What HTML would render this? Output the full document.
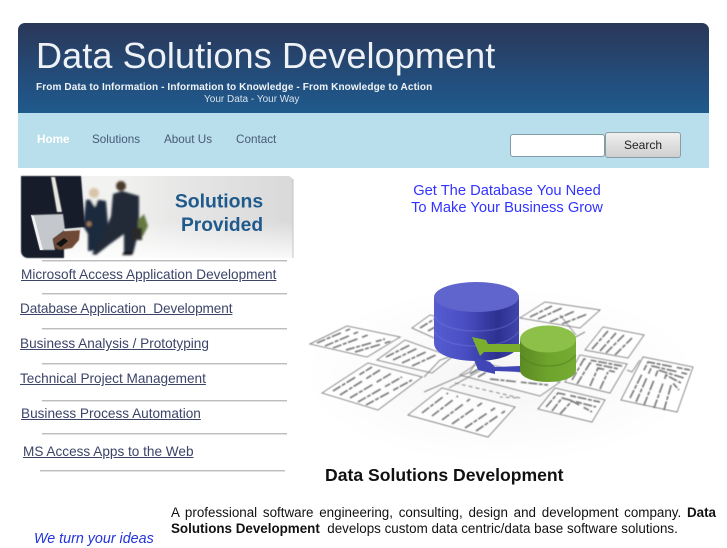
<!DOCTYPE html>
<html><head><meta charset="utf-8"><title>Data Solutions Development</title>
<style>
html,body{margin:0;padding:0;background:#fff;}
body{width:727px;height:545px;overflow:hidden;position:relative;font-family:"Liberation Sans",sans-serif;}
.a{position:absolute;white-space:nowrap;}
.l{position:absolute;height:1px;background:#bdbdbd;box-shadow:0 1px 0 #e2e2e2;}
a{color:#3c4468;text-decoration:underline;}
.k{position:absolute;white-space:pre;font-size:13.6px;line-height:16px;}
.n{position:absolute;top:132px;font-size:11.7px;line-height:15px;color:#4a5a78;white-space:nowrap;}
</style></head><body>

<div class="a" style="left:18px;top:23px;width:691px;height:90px;border-radius:7px 7px 0 0;background:linear-gradient(#2a3758,#225080 70%,#1f5a8c);"></div>
<div class="a" style="left:18px;top:113px;width:691px;height:55px;background:#b8dfeb;"></div>

<div class="a" style="left:36px;top:36px;font-size:36px;line-height:40px;letter-spacing:.12px;color:#eef2f6;">Data Solutions Development</div>
<div class="a" style="left:36px;top:81px;font-size:10px;line-height:13px;letter-spacing:.115px;font-weight:bold;color:#f0f3f6;">From Data to Information - Information to Knowledge - From Knowledge to Action</div>
<div class="a" style="left:204px;top:93px;font-size:10px;line-height:13px;color:#d8e2ea;">Your Data - Your Way</div>

<div class="n" style="left:37px;color:#fff;font-weight:bold;">Home</div>
<div class="n" style="left:92px;">Solutions</div>
<div class="n" style="left:164px;">About Us</div>
<div class="n" style="left:236px;">Contact</div>

<div class="a" style="left:510px;top:134px;width:93px;height:21px;background:#fff;border:1px solid #7f9ca8;border-radius:3px;"></div>
<div class="a" style="left:605px;top:132px;width:74px;height:24px;border:1px solid #8b9ca3;border-radius:3px;background:linear-gradient(#efefef,#cfcfcf);font-size:12px;line-height:24px;text-align:center;color:#222;">Search</div>

<div class="a" style="left:307px;width:400px;top:183px;text-align:center;font-size:14.7px;line-height:17px;color:#3333ff;">Get The Database You Need<br>To Make Your Business Grow</div>

<!-- banner -->
<svg class="a" style="left:20px;top:174px;" width="276" height="86" viewBox="0 0 276 86">
<defs>
<linearGradient id="bg" x1="0" x2="1" y1="0" y2="0"><stop offset="0" stop-color="#f0f0ee"/><stop offset=".35" stop-color="#f2f2f0"/><stop offset=".6" stop-color="#e6e6e6"/><stop offset="1" stop-color="#d9d9d9"/></linearGradient>
<linearGradient id="bg2" x1="0" x2="0" y1="0" y2="1"><stop offset=".55" stop-color="#fff" stop-opacity="0"/><stop offset="1" stop-color="#fff" stop-opacity=".85"/></linearGradient>
<filter id="b1"><feGaussianBlur stdDeviation="1.100"/></filter>
<filter id="b2"><feGaussianBlur stdDeviation=".5"/></filter>
</defs>
<path d="M1 2H268a5 5 0 0 1 5 5V84H8a7 7 0 0 1-7-7Z" fill="url(#bg)"/>
<path d="M1 2H268a5 5 0 0 1 5 5V84H8a7 7 0 0 1-7-7Z" fill="url(#bg2)"/>
<path d="M273 5V84" stroke="#c4c4c4" fill="none"/>
<g filter="url(#b1)">
<path d="M66 26 74 25 86 27 88 50 84 62 82 76 68 77 68 60 63 52Z" fill="#1f2a3c"/>
<circle cx="74" cy="19" r="5" fill="#d8c4a8"/>
<path d="M70 25 78 25 75 33Z" fill="#eee"/>
<path d="M93 20 102 17 119 22 119 56 113 80 104 80 104 60 90 70 76 81 72 80 84 60 91 42Z" fill="#222a38"/>
<circle cx="101" cy="12" r="5" fill="#4a3a2c"/>
<path d="M104 78 112 78 112 81 102 81Z" fill="#111"/>
<path d="M118 46 124 40 128 52 123 62 118 62Z" fill="#66783f"/>
<path d="M112 54 122 54 122 66 112 66Z" fill="#2a2a2a"/>
<circle cx="69" cy="50" r="2.500" fill="#a07a5a"/>
</g>
<path d="M1 2H61L65 53 44 55 44 84H8a7 7 0 0 1-7-7Z" fill="#151d2c" filter="url(#b2)"/>
<path d="M31 3 35 3 42 38 37 38Z" fill="#e8e8e0" filter="url(#b2)"/>
<path d="M11 41 43 40 45 56 33 65 35 76 20 76Z" fill="#c4c8cc" filter="url(#b2)"/>
<path d="M11 41 14 42 23 76 20 76Z" fill="#f2f2f2"/>
<path d="M33 65 44 57 60 56 59 66 52 74 40 76 35 74Z" fill="#6e4a36" filter="url(#b2)"/>
<path d="M36 70 44 64 48 67 41 73Z" fill="#111"/>
<path d="M44 56 61 55" stroke="#dcdcdc" stroke-width="2"/>
<text x="199" y="33.500" text-anchor="middle" font-family="Liberation Sans" font-weight="bold" font-size="19.4" fill="#1f5a8c">Solutions</text>
<text x="202" y="57" text-anchor="middle" font-family="Liberation Sans" font-weight="bold" font-size="19.2" fill="#1f5a8c">Provided</text>
</svg>

<!-- links -->
<div class="l" style="left:42px;top:260px;width:245px;"></div>
<div class="l" style="left:42px;top:293px;width:245px;"></div>
<div class="l" style="left:42px;top:328px;width:245px;"></div>
<div class="l" style="left:42px;top:363px;width:245px;"></div>
<div class="l" style="left:42px;top:400px;width:245px;"></div>
<div class="l" style="left:42px;top:433px;width:245px;"></div>
<div class="l" style="left:40px;top:470px;width:245px;"></div>
<div class="k" style="left:21px;top:267px;"><a href="#">Microsoft Access Application Development</a></div>
<div class="k" style="left:20px;top:301px;letter-spacing:-.09px;"><a href="#">Database Application  Development</a></div>
<div class="k" style="left:20px;top:336px;"><a href="#">Business Analysis / Prototyping</a></div>
<div class="k" style="left:20px;top:371px;"><a href="#">Technical Project Management</a></div>
<div class="k" style="left:21px;top:406px;"><a href="#">Business Process Automation</a></div>
<div class="k" style="left:23px;top:444px;"><a href="#">MS Access Apps to the Web</a></div>

<!-- database illustration -->
<svg class="a" style="left:295px;top:250px;" width="425" height="220" viewBox="295 250 425 220">
<defs>
<linearGradient id="bs" x1="0" x2="1"><stop offset="0" stop-color="#555cd0"/><stop offset=".35" stop-color="#4a50c4"/><stop offset=".75" stop-color="#2c3190"/><stop offset="1" stop-color="#4046ac"/></linearGradient>
<linearGradient id="gs" x1="0" x2="1"><stop offset="0" stop-color="#5c8a24"/><stop offset=".5" stop-color="#6ea32c"/><stop offset="1" stop-color="#76ab34"/></linearGradient>
<radialGradient id="sh"><stop offset="0" stop-color="#000" stop-opacity=".04"/><stop offset="1" stop-color="#000" stop-opacity="0"/></radialGradient>
<filter id="s1"><feGaussianBlur stdDeviation=".4"/></filter>
</defs>
<ellipse cx="500" cy="375" rx="200" ry="90" fill="url(#sh)"/>
<g fill="#fff" fill-opacity=".6" stroke="#858585" stroke-width="1" filter="url(#s1)">
<path d="M310 344 347 326 400 337 367 357Z"/>
<path d="M377 360 405 340 452 357 432 373Z"/>
<path d="M322 393 368 363 422 377 378 410Z"/>
<path d="M408 415 442 388 515 407 488 437Z"/>
<path d="M412 328 430 315 470 325 450 345Z"/>
<path d="M460 375 480 362 560 382 540 396Z"/>
<path d="M520 318 545 302 600 310 580 328Z"/>
<path d="M585 350 603 327 644 335 628 358Z"/>
<path d="M565 382 580 355 627 364 610 393Z"/>
<path d="M621 400 643 357 693 367 677 412Z"/>
<path d="M538 409 555 388 605 400 592 422Z"/>
</g>
<g fill="none" stroke="#8a8a8a" stroke-width="1" filter="url(#s1)">
<path d="M424 377 440 360 470 350"/>
<path d="M424 392 470 372 476 362"/>
<path d="M449 388 490 365"/>
<path d="M455 383 520 398 500 397" stroke-dasharray="4 3"/>
<path d="M576 335 560 315"/>
<path d="M627 370 632 372 640 360"/>
<path d="M570 340 585 332"/>
</g>
<g fill="none" stroke="#7c7c7c" stroke-width="1.700" stroke-dasharray="9 1.500 4 1.500 10 5 6 1.500" filter="url(#s1)">
<path d="M317 343 350 329M325 346 358 332M333 348 368 335M346 350 385 339M355 352 392 341"/>
<path d="M386 357 410 345M393 360 418 348M402 363 428 351M412 366 438 354"/>
<path d="M333 391 372 367M340 395 380 370M350 398 392 373M358 402 402 377M366 405 412 380"/>
<path d="M422 413 448 393M432 416 458 396M442 420 470 399M452 424 482 403M465 428 495 408M476 431 505 411"/>
<path d="M420 328 436 318M428 331 446 321M438 335 456 326"/>
<path d="M470 374 482 367M478 377 490 370M490 379 548 385"/>
<path d="M530 317 552 306M538 319 562 308M550 322 575 311M562 324 590 313"/>
<path d="M592 349 608 331M600 351 616 333M606 353 624 335M615 355 632 338"/>
<path d="M572 380 584 359 622 366M577 384 590 363 619 369M590 386 598 368 615 372M600 389 608 372"/>
<path d="M630 398 648 362 690 370M636 402 652 366 687 374M644 405 658 370 684 378M654 408 666 375 681 383M664 410 672 382 679 390"/>
<path d="M546 407 558 393 600 402M552 411 562 398 596 407M560 414 572 401 592 412"/>
</g>
<!-- blue cylinder -->
<path d="M434 297V343C434 354 452 361 476 361S519 354 519 343V297Z" fill="url(#bs)"/>
<g fill="none" stroke="#7076d8" stroke-opacity=".4" stroke-width="1.500"><path d="M434 316C440 326 455 331 476 331S512 326 519 316"/><path d="M434 331C440 341 455 346 476 346S512 341 519 331"/></g>
<ellipse cx="476.500" cy="297" rx="42.500" ry="15" fill="#5f65cc"/>
<!-- arrows -->
<path d="M472 337 486 340 488 344 520 344 520 352 488 352 484 352 480 356Z" fill="#7cae2e"/>
<path d="M473 357 490 362 495 367 520 366 522 372 495 371 495 374 478 370Z" fill="#4146b6"/>
<!-- green cylinder -->
<path d="M520 339V370C520 377 532 382 548 382S576 377 576 370V339Z" fill="url(#gs)"/>
<g fill="none" stroke="#527e20" stroke-opacity=".5" stroke-width="1.500"><path d="M520 355C528 364 538 366 548 366S568 364 576 355"/></g>
<ellipse cx="548" cy="339" rx="28" ry="13.500" fill="#8cc048"/>
</svg>

<div class="a" style="left:325px;top:465px;font-size:17.6px;line-height:20px;font-weight:bold;color:#111;">Data Solutions Development</div>

<div class="a" style="left:171px;top:505px;width:545px;font-size:13.4px;line-height:16px;color:#111;white-space:normal;text-align:justify;text-align-last:justify;">A professional software engineering, consulting, design and development company. <b>Data</b></div>
<div class="a" style="left:171px;top:521px;font-size:13.4px;line-height:16px;color:#111;white-space:pre;"><b>Solutions Development</b>  develops custom data centric/data base software solutions.</div>

<div class="a" style="left:34px;top:531px;font-size:14.3px;line-height:17px;font-style:italic;color:#2233dd;">We turn your ideas</div>

</body></html>
